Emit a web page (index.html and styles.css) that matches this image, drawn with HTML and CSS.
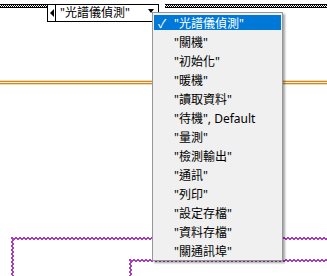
FILE: index.html
```html
<!DOCTYPE html>
<html lang="zh-Hant">
  <head>
    <meta charset="UTF-8" />
    <meta name="viewport" content="width=device-width, initial-scale=1.0" />
    <title>Enum Constant</title>
    <link rel="stylesheet" href="styles.css">
  </head>
  <body>
    <div class="diagram">
      <!-- wires -->
      <div class="wire bool-wire left-part"></div>
      <div class="wire bool-wire right-part"></div>
      <div class="wire orange-wire"></div>
      <div class="frame outer-frame"></div>
      <div class="frame inner-frame"></div>

      <!-- enum constant -->
      <div class="enum-box">
        <span class="enum-dec"></span>
        <span class="enum-text">"光譜儀偵測"</span>
        <span class="enum-arrow"></span>
      </div>

      <!-- drop-down -->
      <ul class="enum-menu">
        <li class="menu-item selected"><span class="check">✓</span>"光譜儀偵測"</li>
        <li class="menu-item"><span class="check"></span>"關機"</li>
        <li class="menu-item"><span class="check"></span>"初始化"</li>
        <li class="menu-item"><span class="check"></span>"暖機"</li>
        <li class="menu-item"><span class="check"></span>"讀取資料"</li>
        <li class="menu-item"><span class="check"></span>"待機", Default</li>
        <li class="menu-item"><span class="check"></span>"量測"</li>
        <li class="menu-item"><span class="check"></span>"檢測輸出"</li>
        <li class="menu-item"><span class="check"></span>"通訊"</li>
        <li class="menu-item"><span class="check"></span>"列印"</li>
        <li class="menu-item"><span class="check"></span>"設定存檔"</li>
        <li class="menu-item"><span class="check"></span>"資料存檔"</li>
        <li class="menu-item"><span class="check"></span>"關通訊埠"</li>
      </ul>
    </div>
  </body>
</html>
```

FILE: styles.css
```css
body {
  margin: 0;
  background: #fff;
  font-family: "Noto Sans", "Noto Sans CJK TC", sans-serif;
  overflow: hidden;
}
.diagram {
  position: relative;
  width: 327px;
  height: 276px;
  overflow: hidden;
}
.wire {
  position: absolute;
}
.bool-wire {
  top: 4px;
  height: 2px;
  border-top: 1px solid #000;
  border-bottom: 1px solid #000;
  background: conic-gradient(#000 25%, #fff 0 50%, #000 0 75%, #fff 0) 0 0 / 2px 2px;
}
.left-part {
  left: 0;
  width: 47px;
}
.right-part {
  left: 165px;
  right: 0;
}
.orange-wire {
  top: 81px;
  left: 0;
  right: 0;
  height: 1px;
  background: #fdf0d2;
  border-top: 1px solid #c98a2c;
  border-bottom: 1px solid #c98a2c;
  box-shadow: 0 -1px 0 #f3dcb0, 0 1px 0 #f3dcb0;
}

/* string wire frames (top + left edge only) */
.frame {
  position: absolute;
  right: 0;
  bottom: 0;
}
.frame::before,
.frame::after {
  content: "";
  position: absolute;
  top: 0;
  left: 0;
}
.frame::before {
  right: 0;
  height: 3px;
  background:
    linear-gradient(90deg, #a83cbc 50%, transparent 50%) 0 0 / 4px 1px repeat-x,
    linear-gradient(#a83cbc, #a83cbc) 0 1px / 100% 1px no-repeat,
    linear-gradient(90deg, transparent 50%, #a83cbc 50%) 0 2px / 4px 1px repeat-x;
}
.frame::after {
  bottom: 0;
  width: 3px;
  background:
    linear-gradient(#a83cbc 50%, transparent 50%) 0 0 / 1px 4px repeat-y,
    linear-gradient(#a83cbc, #a83cbc) 1px 0 / 1px 100% no-repeat,
    linear-gradient(transparent 50%, #a83cbc 50%) 2px 0 / 1px 4px repeat-y;
}
.outer-frame {
  top: 237px;
  left: 11px;
}
.inner-frame {
  top: 259px;
  left: 129px;
}

.enum-box {
  position: absolute;
  top: 4px;
  left: 47px;
  width: 110px;
  height: 16px;
  border: 1px solid #000;
  background: #fff;
  display: flex;
  align-items: center;
}
.enum-dec {
  width: 7px;
  height: 16px;
  border-right: 1px solid #000;
  position: relative;
}
.enum-dec::before {
  content: "";
  position: absolute;
  top: 4px;
  left: 2px;
  border-top: 4px solid transparent;
  border-bottom: 4px solid transparent;
  border-right: 4px solid #000;
}
.enum-text {
  margin-left: 4px;
  font-size: 12px;
  line-height: 16px;
  color: #000;
  flex: 1;
}
.enum-arrow {
  width: 0;
  height: 0;
  margin-right: 4px;
  margin-top: -4px;
  border-left: 3px solid transparent;
  border-right: 3px solid transparent;
  border-top: 4px solid #000;
}
.enum-menu {
  position: absolute;
  top: 12px;
  left: 152px;
  width: 127px;
  margin: 0;
  padding: 0 1px;
  list-style: none;
  background: #f0f0f0;
  border: 1px solid #979797;
  box-shadow: 2px 2px 2px rgba(0, 0, 0, 0.35);
}
.menu-item {
  display: flex;
  align-items: center;
  height: 15px;
  padding: 2px 0;
  background-clip: content-box;
  font-size: 12px;
  color: #000;
  white-space: nowrap;
}
.menu-item.selected {
  background-color: #0078d7;
  color: #fff;
}
.check {
  width: 20px;
  padding-left: 4px;
  box-sizing: border-box;
  font-size: 12px;
}
```
